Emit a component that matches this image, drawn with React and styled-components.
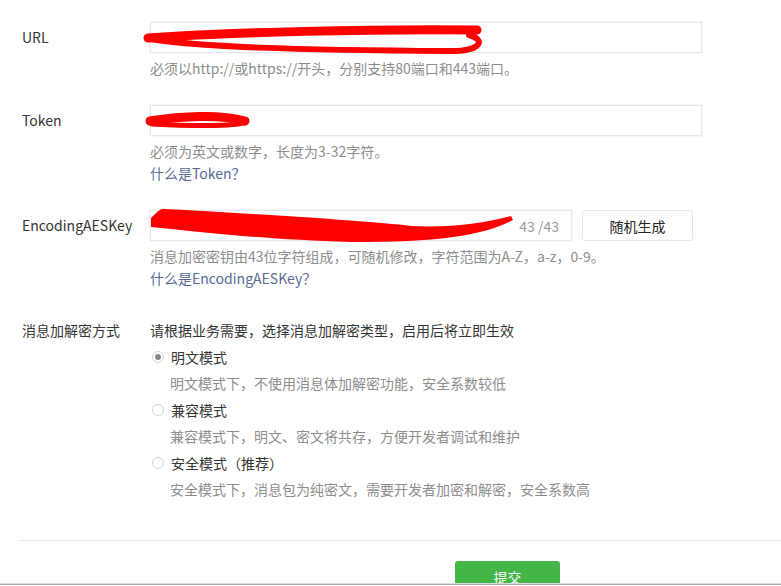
import React, { useState } from "react";
import styled, { createGlobalStyle } from "styled-components";

const GlobalStyle = createGlobalStyle`
  html, body {
    margin: 0;
    padding: 0;
    background: #fff;
  }
  body {
    font-family: "Noto Sans CJK SC", "Noto Sans", "Liberation Sans", sans-serif;
    font-size: 14px;
    color: #353535;
  }
`;

const Page = styled.div`
  position: relative;
  width: 781px;
  height: 586px;
  overflow: hidden;
  background: #fff;
  padding-top: 22px;
  box-sizing: border-box;
`;

const Row = styled.div`
  display: grid;
  grid-template-columns: 128px 1fr;
  padding-left: 22px;
  margin-top: ${(p) => p.$gap || 0}px;
`;

const Label = styled.div`
  color: #353535;
  font-size: 14px;
  line-height: ${(p) => (p.$tall ? 31 : 22)}px;
  white-space: nowrap;
`;

const Field = styled.div`
  display: flex;
  flex-direction: column;
`;

const Line = styled.div`
  display: flex;
  align-items: center;
  gap: 10px;
`;

const InputBox = styled.div`
  position: relative;
  width: ${(p) => p.$width}px;
  height: 31px;
  box-sizing: border-box;
  border: 1px solid #e4e8eb;
  background: #fff;
  box-shadow: 0 0 0 1px #f6f7f8;
  display: flex;
  align-items: center;
  justify-content: flex-end;
  padding: 0 12px;
`;

const Counter = styled.span`
  color: #9a9a9a;
  font-size: 14px;
`;

const Scribble = styled.svg`
  position: absolute;
  left: 0;
  top: 0;
  overflow: visible;
  pointer-events: none;
`;

const Hint = styled.div`
  margin-top: 5px;
  color: #8d8d8d;
  font-size: 14px;
  line-height: 21px;
`;

const HelpLink = styled.a`
  color: #576b95;
  font-size: 14px;
  line-height: 22px;
  text-decoration: none;
`;

const GhostButton = styled.button`
  width: 111px;
  height: 31px;
  border: 1px solid #e4e8eb;
  border-radius: 3px;
  background: #fff;
  color: #222;
  font-family: inherit;
  font-size: 14px;
  cursor: pointer;
`;

const Intro = styled.div`
  color: #353535;
  line-height: 22px;
`;

const Options = styled.div`
  display: flex;
  flex-direction: column;
`;

const Option = styled.label`
  display: flex;
  align-items: center;
  gap: 7px;
  margin-top: 5px;
  padding-left: 2px;
  line-height: 22px;
  color: #353535;
  cursor: pointer;
`;

const RadioDot = styled.span`
  width: 12px;
  height: 12px;
  box-sizing: border-box;
  border-radius: 50%;
  border: 1px solid #d2d2d2;
  background: #fff;
  display: flex;
  align-items: center;
  justify-content: center;

  &::after {
    content: "";
    width: 6px;
    height: 6px;
    border-radius: 50%;
    background: ${(p) => (p.$on ? "#888" : "transparent")};
  }
`;

const OptionDesc = styled.div`
  margin-top: 4px;
  padding-left: 20px;
  color: #8d8d8d;
  line-height: 22px;
`;

const Divider = styled.div`
  margin: 40px 0 0 20px;
  height: 1px;
  background: #e7e7eb;
`;

const SubmitButton = styled.button`
  display: block;
  margin: 20px 0 0 455px;
  width: 105px;
  height: 32px;
  border: 0;
  border-radius: 3px;
  background: #44b549;
  color: #fff;
  font-family: inherit;
  font-size: 14px;
`;

const WindowEdge = styled.div`
  position: absolute;
  left: 0;
  right: 0;
  bottom: 0;
  height: 3px;
  background: #fff;
  border-top: 1px solid #dcdcdc;
  box-sizing: border-box;

  &::before {
    content: "";
    display: block;
    height: 1px;
    background: #a9a9a9;
  }
`;

const modes = [
  { key: "plain", name: "明文模式", desc: "明文模式下，不使用消息体加解密功能，安全系数较低" },
  { key: "compat", name: "兼容模式", desc: "兼容模式下，明文、密文将共存，方便开发者调试和维护" },
  { key: "safe", name: "安全模式（推荐）", desc: "安全模式下，消息包为纯密文，需要开发者加密和解密，安全系数高" },
];

const RED = "#f00";

export default function App() {
  const [mode, setMode] = useState("plain");

  return (
    <Page>
      <GlobalStyle />

      <Row>
        <Label $tall>URL</Label>
        <Field>
          <InputBox $width={552}>
            <Scribble width="552" height="31">
              <path d="M -3 15 C 80 9, 220 6, 326 7" stroke={RED} strokeWidth="9" fill="none" strokeLinecap="round" />
              <path d="M 0 16 C 50 24, 140 27, 300 28 C 332 28, 334 16, 318 12" stroke={RED} strokeWidth="6" fill="none" strokeLinecap="round" />
            </Scribble>
          </InputBox>
          <Hint>必须以http://或https://开头，分别支持80端口和443端口。</Hint>
        </Field>
      </Row>

      <Row $gap={26}>
        <Label $tall>Token</Label>
        <Field>
          <InputBox $width={552}>
            <Scribble width="552" height="31">
              <path d="M -1 15 C 30 10, 70 8, 94 15" stroke={RED} strokeWidth="9" fill="none" strokeLinecap="round" />
              <path d="M 1 18 C 40 20, 78 20, 93 17" stroke={RED} strokeWidth="5" fill="none" strokeLinecap="round" />
            </Scribble>
          </InputBox>
          <Hint>必须为英文或数字，长度为3-32字符。</Hint>
          <HelpLink href="#">什么是Token？</HelpLink>
        </Field>
      </Row>

      <Row $gap={26}>
        <Label $tall>EncodingAESKey</Label>
        <Field>
          <Line>
            <InputBox $width={422}>
              <Scribble width="422" height="31">
                <path
                  d="M 0 7 C 6 1, 10 -3, 14 -2 C 90 2, 220 10, 260 15 C 300 17, 335 12, 360 5 L 362 9 C 330 25, 290 31, 200 31 C 120 29, 60 22, 0 16 Z"
                  fill={RED}
                />
              </Scribble>
              <Counter>43 /43</Counter>
            </InputBox>
            <GhostButton>随机生成</GhostButton>
          </Line>
          <Hint>消息加密密钥由43位字符组成，可随机修改，字符范围为A-Z，a-z，0-9。</Hint>
          <HelpLink href="#">什么是EncodingAESKey？</HelpLink>
        </Field>
      </Row>

      <Row $gap={30}>
        <Label>消息加解密方式</Label>
        <Field>
          <Intro>请根据业务需要，选择消息加解密类型，启用后将立即生效</Intro>
          <Options>
            {modes.map((m) => (
              <React.Fragment key={m.key}>
                <Option onClick={() => setMode(m.key)}>
                  <RadioDot $on={mode === m.key} />
                  {m.name}
                </Option>
                <OptionDesc>{m.desc}</OptionDesc>
              </React.Fragment>
            ))}
          </Options>
        </Field>
      </Row>

      <Divider />
      <SubmitButton>提交</SubmitButton>

      <WindowEdge />
    </Page>
  );
}
